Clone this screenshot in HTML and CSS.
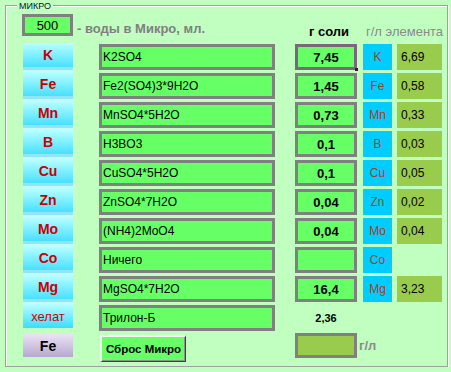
FILE: index.html
```html
<!DOCTYPE html>
<html lang="ru">
<head>
<meta charset="utf-8">
<title>Микро</title>
<link rel="stylesheet" href="styles.css">
</head>
<body>
<div class="group">
  <span class="caption">МИКРО</span>
  <div class="head">
    <div class="water">500</div>
    <div class="water-label">- воды в Микро, мл.</div>
    <div class="hdr-salt">г соли</div>
    <div class="hdr-el">г/л элемента</div>
  </div>

  <div class="row">
    <div class="el-btn">K</div>
    <div class="salt">K2SO4</div>
    <div class="grams focus">7,45</div>
    <div class="el-tag">K</div>
    <div class="conc">6,69</div>
  </div>
  <div class="row">
    <div class="el-btn">Fe</div>
    <div class="salt">Fe2(SO4)3*9H2O</div>
    <div class="grams">1,45</div>
    <div class="el-tag">Fe</div>
    <div class="conc">0,58</div>
  </div>
  <div class="row">
    <div class="el-btn">Mn</div>
    <div class="salt">MnSO4*5H2O</div>
    <div class="grams">0,73</div>
    <div class="el-tag">Mn</div>
    <div class="conc">0,33</div>
  </div>
  <div class="row">
    <div class="el-btn">B</div>
    <div class="salt">H3BO3</div>
    <div class="grams">0,1</div>
    <div class="el-tag">B</div>
    <div class="conc">0,03</div>
  </div>
  <div class="row">
    <div class="el-btn">Cu</div>
    <div class="salt">CuSO4*5H2O</div>
    <div class="grams">0,1</div>
    <div class="el-tag">Cu</div>
    <div class="conc">0,05</div>
  </div>
  <div class="row">
    <div class="el-btn">Zn</div>
    <div class="salt">ZnSO4*7H2O</div>
    <div class="grams">0,04</div>
    <div class="el-tag">Zn</div>
    <div class="conc">0,02</div>
  </div>
  <div class="row">
    <div class="el-btn">Mo</div>
    <div class="salt">(NH4)2MoO4</div>
    <div class="grams">0,04</div>
    <div class="el-tag">Mo</div>
    <div class="conc">0,04</div>
  </div>
  <div class="row">
    <div class="el-btn">Co</div>
    <div class="salt">Ничего</div>
    <div class="grams"></div>
    <div class="el-tag">Co</div>
  </div>
  <div class="row">
    <div class="el-btn">Mg</div>
    <div class="salt">MgSO4*7H2O</div>
    <div class="grams">16,4</div>
    <div class="el-tag">Mg</div>
    <div class="conc">3,23</div>
  </div>
  <div class="row">
    <div class="el-btn chelat">хелат</div>
    <div class="salt">Трилон-Б</div>
    <div class="plain">2,36</div>
  </div>
  <div class="row last">
    <div class="fe-btn">Fe</div>
    <div class="reset">Сброс Микро</div>
    <div class="total"></div>
    <div class="unit">г/л</div>
  </div>
</div>
</body>
</html>
```

FILE: styles.css
```css
html, body {
  margin: 0;
  padding: 0;
  background: #c0ffc0;
  font-family: "Liberation Sans", Arial, sans-serif;
  color: #000;
}

.group {
  position: relative;
  box-sizing: border-box;
  width: 443px;
  height: 362px;
  margin: 5px 0 0 5px;
  border: 1px solid #a0a0a0;
  box-shadow: inset 1px 1px 0 #fff, 1px 1px 0 #fff;
  padding: 8px 0 0 17px;
}

.caption {
  position: absolute;
  left: 11px;
  top: -5px;
  padding: 0 2px;
  background: #c0ffc0;
  font-size: 9px;
  line-height: 11px;
  color: #101030;
}

.head {
  display: flex;
  align-items: flex-start;
  height: 22px;
  margin-bottom: 7px;
}

.water {
  box-sizing: border-box;
  width: 51px;
  height: 22px;
  margin-left: -1px;
  border: 3px solid #808080;
  background: #66ff66;
  font-size: 13px;
  display: flex;
  align-items: center;
  justify-content: center;
}

.water-label {
  width: 218px;
  margin-left: 4px;
  margin-top: 7px;
  font-size: 13px;
  line-height: 15px;
  font-weight: bold;
  color: #808080;
}

.hdr-salt {
  width: 62px;
  margin-top: 10px;
  padding-left: 6px;
  box-sizing: border-box;
  text-align: center;
  font-size: 13px;
  line-height: 15px;
  font-weight: bold;
}

.hdr-el {
  margin-left: 9px;
  margin-top: 10px;
  font-size: 13px;
  line-height: 15px;
  color: #8a8a8a;
}

.row {
  display: flex;
  align-items: flex-start;
  height: 29px;
}

.el-btn {
  box-sizing: border-box;
  width: 50px;
  height: 29px;
  padding-bottom: 3px;
  background:
    linear-gradient(#8fe6f8, #8fe6f8) bottom / 100% 3px no-repeat,
    linear-gradient(#b8ffff, #3adcff);
  border-bottom: 2px solid #c8f8ff;
  display: flex;
  align-items: center;
  justify-content: center;
  font-size: 14px;
  font-weight: bold;
  color: #cc0000;
}

.el-btn.chelat {
  height: 24px;
  padding-bottom: 0;
  border-bottom: 0;
  background: linear-gradient(#b8ffff, #3adcff);
  font-size: 13px;
  font-weight: normal;
  color: #d00000;
}

.salt,
.grams {
  box-sizing: border-box;
  height: 26px;
  margin-top: 1px;
  border: 3px solid #808080;
  background: #66ff66;
  display: flex;
  align-items: center;
}

.salt {
  width: 176px;
  margin-left: 26px;
  padding-left: 1px;
  font-size: 12px;
}

.grams {
  position: relative;
  width: 62px;
  margin-left: 20px;
  justify-content: center;
  font-size: 13px;
  font-weight: bold;
}

.grams.focus {
  border-color: #7d657d;
}

.grams.focus::after {
  content: "";
  position: absolute;
  right: -4px;
  bottom: -4px;
  width: 3px;
  height: 3px;
  background: #4a0a4a;
}

.plain {
  width: 62px;
  margin-left: 20px;
  height: 26px;
  margin-top: 1px;
  display: flex;
  align-items: center;
  justify-content: center;
  font-size: 11px;
  font-weight: bold;
}

.el-tag {
  width: 29px;
  height: 26px;
  margin-top: 1px;
  margin-left: 6px;
  background: #00ccff;
  display: flex;
  align-items: center;
  justify-content: center;
  font-size: 12px;
  color: #a8401c;
}

.conc {
  box-sizing: border-box;
  width: 45px;
  height: 26px;
  margin-top: 1px;
  margin-left: 5px;
  padding-left: 4px;
  background: #99cc4c;
  display: flex;
  align-items: center;
  font-size: 12px;
}

.row.last {
  height: 30px;
}

.fe-btn {
  width: 50px;
  height: 23px;
  margin-top: 1px;
  background: linear-gradient(#ebe4f4, #b6a8d2);
  display: flex;
  align-items: center;
  justify-content: center;
  font-size: 14px;
  font-weight: bold;
}

.reset {
  box-sizing: border-box;
  width: 86px;
  height: 27px;
  margin-top: 2px;
  margin-left: 27px;
  background: #66ff66;
  border-top: 2px solid #f4f4f4;
  border-left: 2px solid #f4f4f4;
  border-right: 1px solid #404040;
  border-bottom: 1px solid #404040;
  box-shadow: inset -1px -1px 0 #909090;
  display: flex;
  align-items: center;
  justify-content: center;
  font-size: 11.5px;
  font-weight: bold;
}

.total {
  box-sizing: border-box;
  width: 62px;
  height: 25px;
  margin-left: 109px;
  border: 3px solid #808080;
  background: #99cc4c;
}

.unit {
  margin-left: 2px;
  margin-top: 5px;
  font-size: 13px;
  line-height: 15px;
  font-weight: bold;
  color: #8a8a8a;
}
```
